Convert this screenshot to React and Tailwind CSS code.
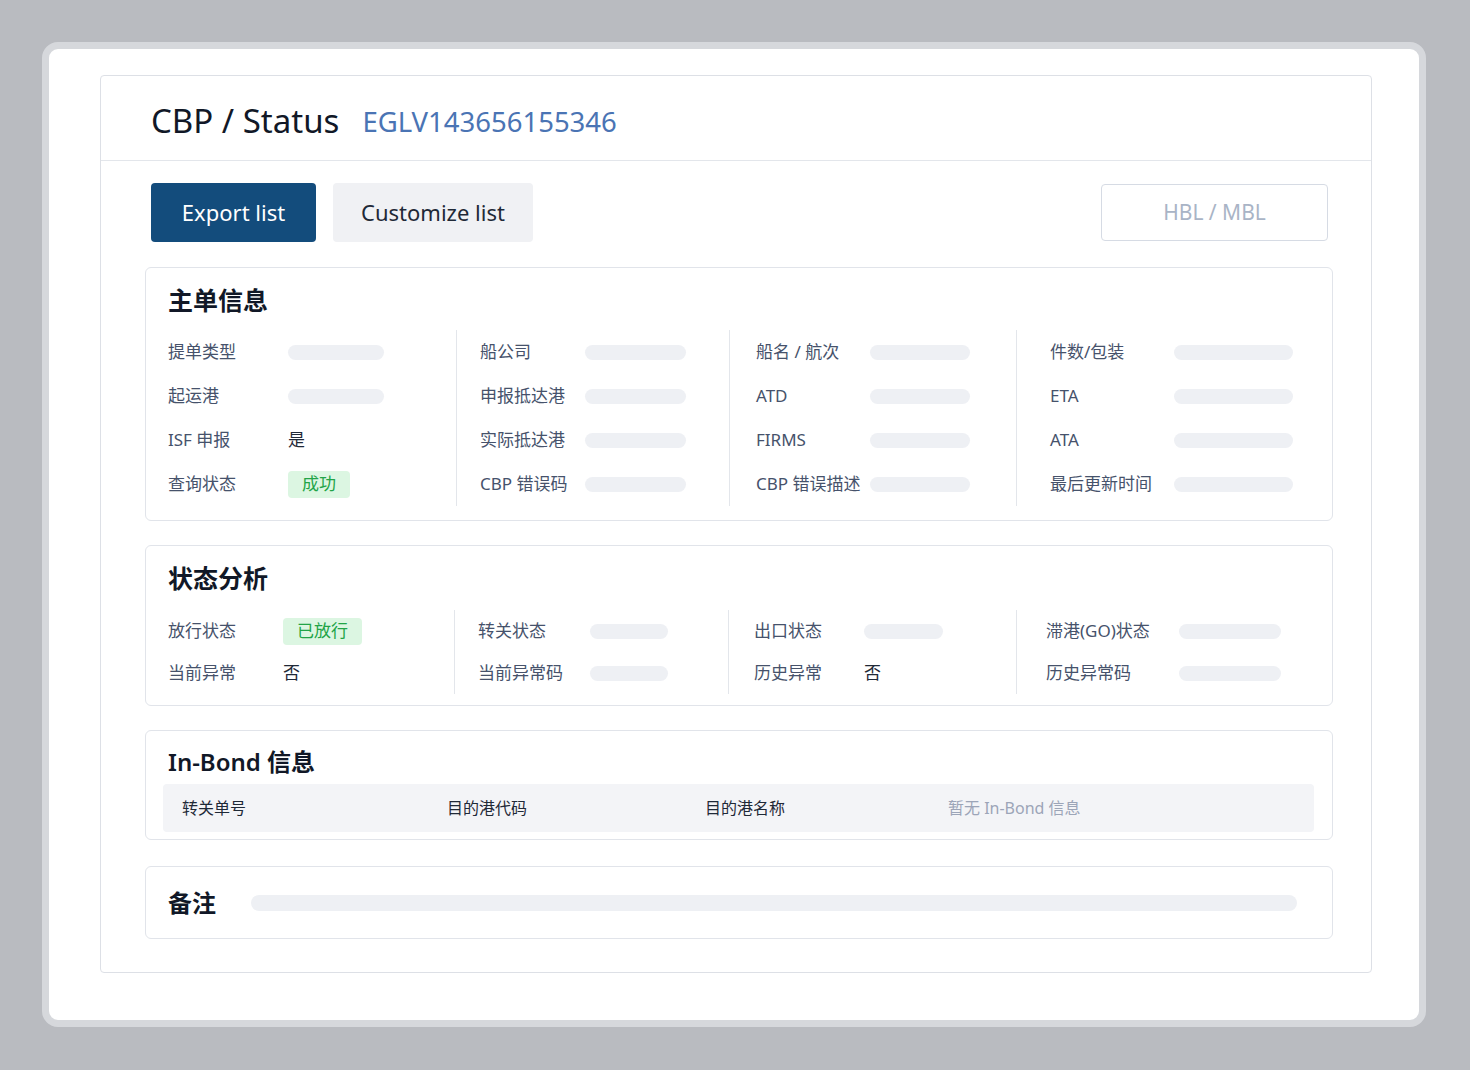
const font = "font-['Noto_Sans','Noto_Sans_CJK_SC',sans-serif]";

const mainInfo = [
  {
    pl: "pl-[22px]",
    labelW: "w-[120px]",
    rows: [
      { label: "提单类型", bar: "w-[96px]" },
      { label: "起运港", bar: "w-[96px]" },
      { label: "ISF 申报", text: "是" },
      { label: "查询状态", badge: "成功" },
    ],
  },
  {
    pl: "pl-[23px]",
    labelW: "w-[105px]",
    rows: [
      { label: "船公司", bar: "w-[101px]" },
      { label: "申报抵达港", bar: "w-[101px]" },
      { label: "实际抵达港", bar: "w-[101px]" },
      { label: "CBP 错误码", bar: "w-[101px]" },
    ],
  },
  {
    pl: "pl-[26px]",
    labelW: "w-[114px]",
    rows: [
      { label: "船名 / 航次", bar: "w-[100px]" },
      { label: "ATD", bar: "w-[100px]" },
      { label: "FIRMS", bar: "w-[100px]" },
      { label: "CBP 错误描述", bar: "w-[100px]" },
    ],
  },
  {
    pl: "pl-[33px]",
    labelW: "w-[124px]",
    rows: [
      { label: "件数/包装", bar: "w-[119px]" },
      { label: "ETA", bar: "w-[119px]" },
      { label: "ATA", bar: "w-[119px]" },
      { label: "最后更新时间", bar: "w-[119px]" },
    ],
  },
];

const statusInfo = [
  {
    pl: "pl-[22px]",
    labelW: "w-[115px]",
    rows: [
      { label: "放行状态", badge: "已放行" },
      { label: "当前异常", text: "否" },
    ],
  },
  {
    pl: "pl-[23px]",
    labelW: "w-[112px]",
    rows: [
      { label: "转关状态", bar: "w-[78px]" },
      { label: "当前异常码", bar: "w-[78px]" },
    ],
  },
  {
    pl: "pl-[25px]",
    labelW: "w-[110px]",
    rows: [
      { label: "出口状态", bar: "w-[79px]" },
      { label: "历史异常", text: "否" },
    ],
  },
  {
    pl: "pl-[29px]",
    labelW: "w-[133px]",
    rows: [
      { label: "滞港(GO)状态", bar: "w-[102px]" },
      { label: "历史异常码", bar: "w-[102px]" },
    ],
  },
];

function Value({ row }) {
  if (row.bar) {
    return <div className={`${row.bar} h-[15px] rounded-full bg-[#eef0f4]`}></div>;
  }
  if (row.badge) {
    return (
      <span className="inline-flex h-[27px] items-center rounded-[4px] bg-[#dcf6e2] px-[14px] text-[17px] text-[#22a447]">
        {row.badge}
      </span>
    );
  }
  return <span className="text-[17px] text-[#1f2937]">{row.text}</span>;
}

function InfoGrid({ cols, widths, rowH }) {
  return (
    <div className={`grid ${widths}`}>
      {cols.map((col, i) => (
        <div key={i} className={`${col.pl} ${i > 0 ? "border-l border-[#e3e6eb]" : ""}`}>
          {col.rows.map((row, j) => (
            <div key={j} className={`flex ${rowH} items-center`}>
              <span className={`${col.labelW} shrink-0 text-[17px] text-[#46526b]`}>{row.label}</span>
              <Value row={row} />
            </div>
          ))}
        </div>
      ))}
    </div>
  );
}

export default function App() {
  return (
    <div className={`min-h-screen bg-[#b9bbc0] pl-[42px] pt-[42px] ${font}`}>
      <div className="h-[985px] w-[1384px] rounded-[16px] border-[7px] border-[#d6d8dc] bg-white pl-[51px] pt-[26px]">
        <div className="h-[898px] w-[1272px] rounded-[4px] border border-[#dde0e6]">
          {/* Header */}
          <div className="flex h-[85px] items-center border-b border-[#e3e6eb] pl-[50px] pt-[5px]">
            <h1 className="text-[33px] text-[#111827]">CBP / Status</h1>
            <span className="ml-[23px] mt-[2px] text-[27.5px] text-[#4a74b4]">EGLV143656155346</span>
          </div>

          {/* Toolbar */}
          <div className="flex items-center pl-[50px] pr-[43px] pt-[22px]">
            <button className="h-[59px] w-[165px] rounded-[4px] bg-[#134c7c] text-[22px] text-white">
              Export list
            </button>
            <button className="ml-[17px] h-[59px] w-[200px] rounded-[4px] bg-[#f0f1f4] text-[22px] text-[#1f2937]">
              Customize list
            </button>
            <div className="ml-auto flex h-[57px] w-[227px] items-center justify-center rounded-[4px] border border-[#d6dbe4] text-[21px] text-[#a9b4c6]">
              HBL / MBL
            </div>
          </div>

          <div className="mt-[25px] flex flex-col gap-[24px] pl-[44px] pr-[38px]">
            {/* 主单信息 */}
            <div className="rounded-[6px] border border-[#e1e4ea] pb-[14px] pt-[15px]">
              <h2 className="h-[34px] pl-[22px] text-[25px] font-bold leading-[34px] text-[#111827]">主单信息</h2>
              <div className="mt-[13px]">
                <InfoGrid
                  cols={mainInfo}
                  widths="grid-cols-[310px_273px_287px_1fr]"
                  rowH="h-[44px]"
                />
              </div>
            </div>

            {/* 状态分析 */}
            <div className="rounded-[6px] border border-[#e1e4ea] pb-[11px] pt-[15px]">
              <h2 className="h-[34px] pl-[22px] text-[25px] font-bold leading-[34px] text-[#111827]">状态分析</h2>
              <div className="mt-[15px]">
                <InfoGrid
                  cols={statusInfo}
                  widths="grid-cols-[308px_274px_288px_1fr]"
                  rowH="h-[42px]"
                />
              </div>
            </div>

            {/* In-Bond 信息 */}
            <div className="rounded-[6px] border border-[#e1e4ea] pb-[7px] pt-[14px]">
              <h2 className="h-[34px] pl-[22px] text-[24px] font-semibold leading-[34px] text-[#111827]">In-Bond 信息</h2>
              <div className="ml-[17px] mr-[18px] mt-[5px] flex h-[48px] items-center rounded-[4px] bg-[#f3f4f7] pl-[19px] text-[16px]">
                <span className="w-[265px] text-[#1f2937]">转关单号</span>
                <span className="w-[258px] text-[#1f2937]">目的港代码</span>
                <span className="w-[243px] text-[#1f2937]">目的港名称</span>
                <span className="text-[#9ca5b8]">暂无 In-Bond 信息</span>
              </div>
            </div>

            {/* 备注 */}
            <div className="mt-[2px] flex h-[73px] items-center rounded-[6px] border border-[#e1e4ea] pl-[22px] pr-[35px]">
              <h2 className="w-[83px] shrink-0 text-[24px] font-bold text-[#111827]">备注</h2>
              <div className="h-[16px] flex-1 rounded-full bg-[#eef0f4]"></div>
            </div>
          </div>
        </div>
      </div>
    </div>
  );
}
